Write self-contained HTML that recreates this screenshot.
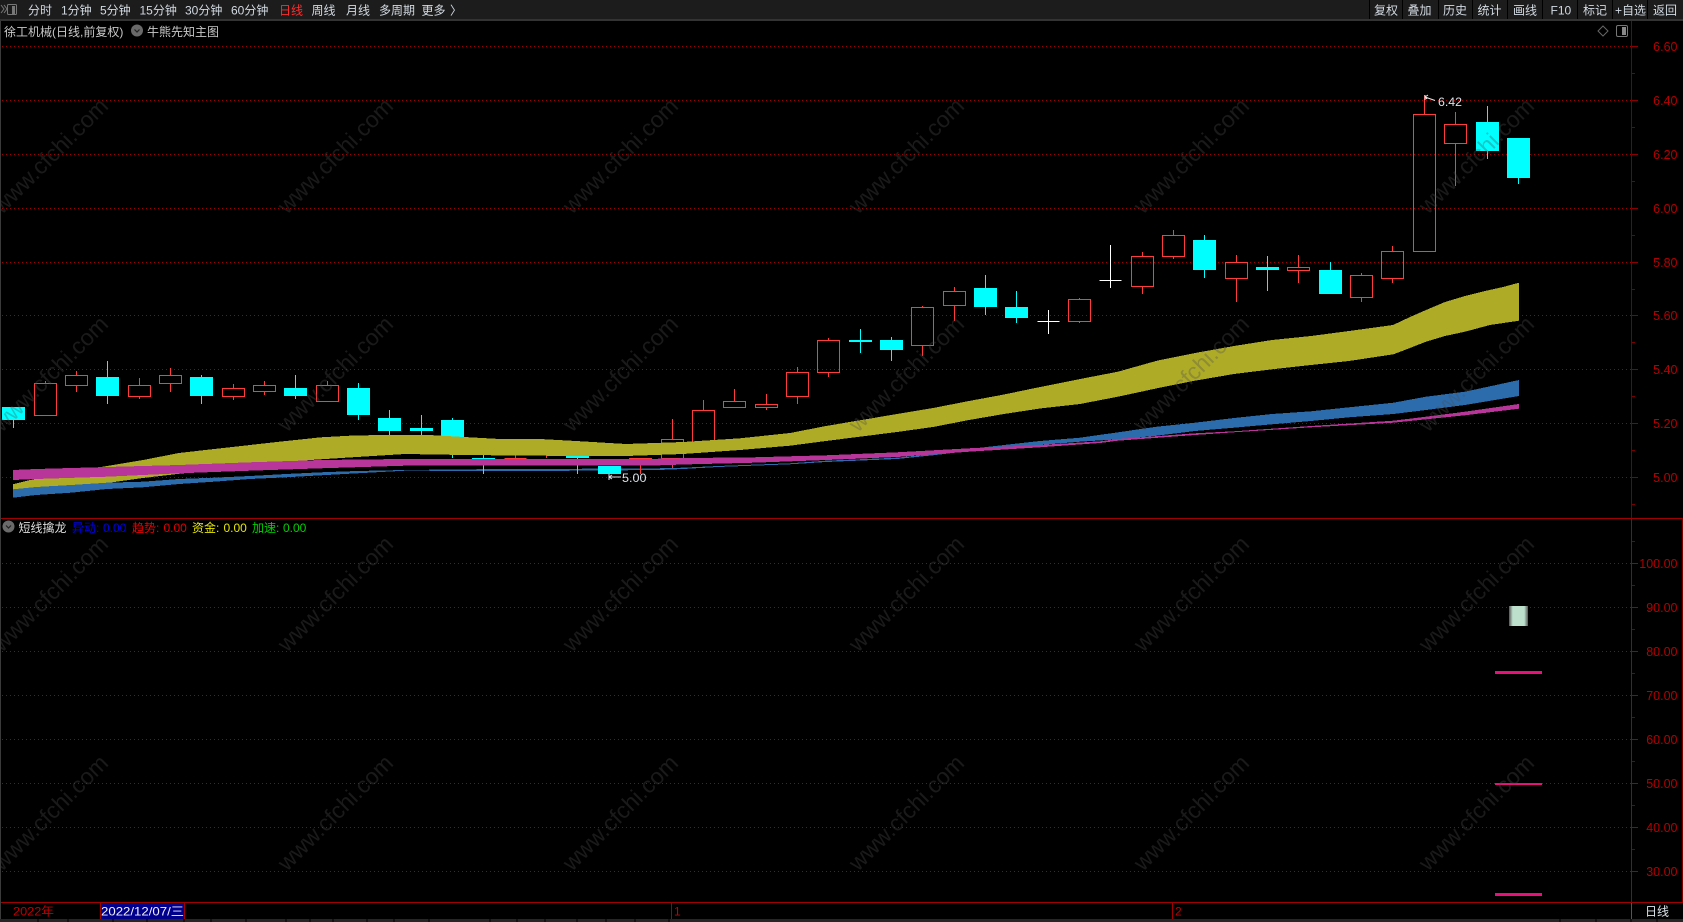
<!DOCTYPE html>
<html lang="zh">
<head>
<meta charset="utf-8">
<title>徐工机械</title>
<style>
html,body{margin:0;padding:0;background:#000;width:1683px;height:922px;overflow:hidden}
svg{display:block;position:absolute;left:0;top:0}
text{font-family:"Liberation Sans","Noto Sans CJK SC",sans-serif;font-size:12px}
.tb text{fill:#d2dae2}
.ax text{fill:#b40000;font-size:12.5px;text-anchor:end}
.wm text{font-size:23px;fill:#505050;fill-opacity:.33}
</style>
</head>
<body>
<svg width="1683" height="922" viewBox="0 0 1683 922" xmlns="http://www.w3.org/2000/svg">
<rect width="1683" height="922" fill="#000"/>

<!-- grid -->
<g stroke="#a00000" stroke-width="1" stroke-dasharray="1 3" fill="none" shape-rendering="crispEdges">
<path d="M2 46.5H1631M2 100.5H1631M2 154.5H1631M2 208.5H1631M2 262.5H1631M2 315.5H1631M2 369.5H1631M2 423.5H1631M2 477.5H1631"/>
<path d="M2 563.5H1631M2 607.5H1631M2 651.5H1631M2 695.5H1631M2 739.5H1631M2 783.5H1631M2 827.5H1631M2 871.5H1631"/>
</g>

<!-- candles -->
<g shape-rendering="crispEdges" fill="none" stroke-width="1">
<path stroke="#ff3c3c" d="
M34.5 383.5H56.5V415.5H34.5ZM45.5 381V383
M65.5 375.5H87.5V385.5H65.5ZM76.5 371V375M76.5 386V392
M128.5 385.5H150.5V396.5H128.5ZM139.5 378V385M139.5 397V399
M159.5 375.5H181.5V383.5H159.5ZM170.5 368V375M170.5 384V392
M222.5 388.5H244.5V396.5H222.5ZM233.5 384V388M233.5 397V400
M253.5 385.5H275.5V391.5H253.5ZM264.5 381V385M264.5 392V395
M316.5 385.5H338.5V401.5H316.5ZM327.5 381V385
M504.5 458.5H526.5M515.5 455V458
M546.5 455V458
M629.5 458.5H651.5V463.5H629.5ZM640.5 464V474
M661.5 439.5H683.5V458.5H661.5ZM672.5 419V439M672.5 459V468
M692.5 410.5H714.5V443.5H692.5ZM703.5 400V410
M723.5 401.5H745.5V407.5H723.5ZM734.5 389V401
M755.5 404.5H777.5V407.5H755.5ZM766.5 394V404M766.5 408V410
M786.5 372.5H808.5V396.5H786.5ZM797.5 367V372M797.5 397V404
M817.5 340.5H839.5V372.5H817.5ZM828.5 338V340M828.5 373V377
M911.5 307.5H933.5V345.5H911.5ZM922.5 306V307M922.5 346V356
M943.5 291.5H965.5V305.5H943.5ZM954.5 287V291M954.5 306V321
M1068.5 299.5H1090.5V321.5H1068.5ZM1079.5 298V299M1079.5 322V323
M1131.5 256.5H1153.5V286.5H1131.5ZM1142.5 252V256M1142.5 287V294
M1162.5 235.5H1184.5V256.5H1162.5ZM1173.5 230V235M1173.5 257V259
M1225.5 262.5H1247.5V278.5H1225.5ZM1236.5 255V262M1236.5 279V302
M1287.5 267.5H1309.5V270.5H1287.5ZM1298.5 255V267M1298.5 271V283
M1350.5 275.5H1372.5V297.5H1350.5ZM1361.5 273V275M1361.5 298V302
M1381.5 251.5H1403.5V278.5H1381.5ZM1392.5 246V251M1392.5 279V283
M1413.5 114.5H1435.5V251.5H1413.5ZM1424.5 95V114
M1444.5 124.5H1466.5V143.5H1444.5ZM1455.5 112V124M1455.5 144V186"/>
<path stroke="#00ffff" d="M13.5 420V428M107.5 361V377M107.5 396V404M201.5 375V377M201.5 396V404M295.5 375V388M295.5 396V399M358.5 383V388M358.5 415V420M389.5 410V418M389.5 431V435M421.5 415V428M421.5 431V435M452.5 418V420M452.5 437V458M483.5 455V474M577.5 458V474M860.5 329V353M891.5 337V340M891.5 350V361M985.5 275V288M985.5 307V315M1016.5 291V307M1016.5 318V323M1204.5 235V240M1204.5 270V278M1267.5 256V291M1330.5 262V270M1487.5 106V122M1487.5 151V159M1518.5 178V184"/>
<path fill="#00ffff" d="M2 407h23v13h-23zM96 377h23v19h-23zM190 377h23v19h-23zM284 388h23v8h-23zM347 388h23v27h-23zM378 418h23v13h-23zM410 428h23v3h-23zM441 420h23v17h-23zM472 458h23v1h-23zM566 455h23v3h-23zM849 340h23v2h-23zM880 340h23v10h-23zM974 288h23v19h-23zM1005 307h23v11h-23zM1193 240h23v30h-23zM1256 267h23v3h-23zM1319 270h23v24h-23zM1476 122h23v29h-23zM1507 138h23v40h-23z"/>
<path stroke="#ffffff" d="M1037.5 321.5H1059.5M1048.5 310V334M1099.5 280.5H1121.5M1110.5 245V288"/>
</g>

<!-- bands -->
<g shape-rendering="crispEdges">
<polygon fill="#aeab27" points="13,484.3 30,480 103,466.7 143,460 179,453 214,449 250,445 286,441 321,437.3 357,435.3 429,435 464,437 500,439 540,439 576,441 626,444 683,442 740,438.3 790,433 826,426 897,414 933,408 969,401 1004,394.5 1040,387 1080,379 1118,371.7 1157,360.7 1195,353 1234,346 1272,340 1311,336 1349,331 1393,325 1410,317 1426,310 1445,302 1465,296 1485,291 1503,287 1519,282.7 1519,320.7 1490,325 1465,331.7 1445,336 1426,341.7 1410,348 1393.5,354.3 1349,361 1311,365 1272,369.3 1234,374 1195,380.7 1157,388.3 1118,396.7 1080,404 1040,408.5 1004,414 969,420 933,427 897,432 826,441 790,445.7 740,450 683,454 626,456 576,456 540,455.7 464,455 405,454 357,457 310,460 186,473 143,478 107,483 50,490 13,497.7"/>
<polygon fill="#2c6cad" points="13,489.3 36,487 71,485 107,482.7 143,481.7 179,479 214,477.7 250,476 286,474 321,472.3 357,471 405,470 500,469 540,469 658,468.3 683,467.7 718,466 790,463.3 826,460.7 897,457.7 933,454 969,449 1004,445 1040,441 1080,437.7 1118,432.3 1157,426.7 1195,422.7 1234,418 1272,414 1311,411.3 1349,407.3 1393.5,402.7 1426,396.7 1465,391.7 1519,380 1519,396 1465,405 1426,410 1393.5,414 1349,417.3 1311,421 1272,424.3 1234,427.7 1195,431 1157,435.7 1118,439.3 1080,441.7 1040,445 969,451 933,455.3 897,459 826,462 790,464.3 718,467 683,469 658,470 540,471 405,470.7 321,475.3 286,477.3 250,479 214,481.7 179,484 143,487.3 107,489 71,492.7 36,495 13,497.7"/>
<path d="M598 466h23v8h-23z" fill="#00ffff"/>
<path d="M483.5 466V474M577.5 466V474" stroke="#00ffff" stroke-width="1"/>
<path d="M640.5 466V474" stroke="#ff3c3c" stroke-width="1"/>
<polygon fill="#b8359a" points="13,470 36,469 107,467 179,465 250,462.3 321,460 405,459 540,459 647,459 690,458 754,457.3 826,455.3 897,452.3 969,448.3 1040,445 1100,441.3 1118,439 1195,433.3 1234,431.3 1311,426 1393.5,420.7 1426,416.7 1465,411.7 1519,404 1519,408.7 1465,415.3 1426,419.3 1393.5,422.7 1311,427.3 1234,432.3 1195,435 1118,440.7 1100,443 1040,447.3 969,451.7 897,457 826,460 754,462.7 690,464.3 647,465.7 405,465.7 321,468.3 250,470.7 179,473.3 107,476.7 36,479 13,480"/>
</g>

<!-- lower pane shapes -->
<defs><linearGradient id="g" x1="0" x2="1" y1="0" y2="0"><stop offset="0" stop-color="#555"/><stop offset=".2" stop-color="#bde0cd"/><stop offset=".8" stop-color="#bde0cd"/><stop offset="1" stop-color="#555"/></linearGradient></defs>
<rect x="1509" y="606" width="19" height="20" fill="url(#g)"/>
<g fill="#e8107a" shape-rendering="crispEdges">
<rect x="1495" y="671" width="47" height="3"/>
<rect x="1495" y="783" width="47" height="2"/>
<rect x="1495" y="893" width="47" height="3"/>
</g>

<!-- watermark -->
<g class="wm">
<text transform="translate(2 215) rotate(-45)">www.cfchi.com</text><text transform="translate(287 215) rotate(-45)">www.cfchi.com</text><text transform="translate(572 215) rotate(-45)">www.cfchi.com</text><text transform="translate(858 215) rotate(-45)">www.cfchi.com</text><text transform="translate(1143 215) rotate(-45)">www.cfchi.com</text><text transform="translate(1428 215) rotate(-45)">www.cfchi.com</text>
<text transform="translate(2 433) rotate(-45)">www.cfchi.com</text><text transform="translate(287 433) rotate(-45)">www.cfchi.com</text><text transform="translate(572 433) rotate(-45)">www.cfchi.com</text><text transform="translate(858 433) rotate(-45)">www.cfchi.com</text><text transform="translate(1143 433) rotate(-45)">www.cfchi.com</text><text transform="translate(1428 433) rotate(-45)">www.cfchi.com</text>
<text transform="translate(2 653) rotate(-45)">www.cfchi.com</text><text transform="translate(287 653) rotate(-45)">www.cfchi.com</text><text transform="translate(572 653) rotate(-45)">www.cfchi.com</text><text transform="translate(858 653) rotate(-45)">www.cfchi.com</text><text transform="translate(1143 653) rotate(-45)">www.cfchi.com</text><text transform="translate(1428 653) rotate(-45)">www.cfchi.com</text>
<text transform="translate(2 872) rotate(-45)">www.cfchi.com</text><text transform="translate(287 872) rotate(-45)">www.cfchi.com</text><text transform="translate(572 872) rotate(-45)">www.cfchi.com</text><text transform="translate(858 872) rotate(-45)">www.cfchi.com</text><text transform="translate(1143 872) rotate(-45)">www.cfchi.com</text><text transform="translate(1428 872) rotate(-45)">www.cfchi.com</text>
</g>

<!-- price labels -->
<g fill="#d8e0e8">
<path d="M609 477H621M609 477l3-2M609 477l3 2M609 474v6" stroke="#d8e0e8" stroke-width="1" fill="none"/>
<text x="622" y="482" textLength="24.500" lengthAdjust="spacingAndGlyphs">5.00</text>
<path d="M1425 97l10 3.500M1425 97l3-2M1425 97l2 2M1425 95v5" stroke="#e8e8e8" stroke-width="1" fill="none"/>
<text x="1438" y="106" textLength="24" lengthAdjust="spacingAndGlyphs">6.42</text>
</g>

<!-- frame lines -->
<g shape-rendering="crispEdges" fill="none">
<path d="M0.5 20V919" stroke="#3a3a3a"/>
<path d="M1631.5 20V518" stroke="#7a0000"/>
<path d="M1631.5 518V902" stroke="#a00000"/>
<path d="M1 518.5H1683M1 902.5H1683" stroke="#a00000"/>
<path d="M1682.5 518V902" stroke="#800000"/>
<path d="M1632 46.5h6M1632 100.5h6M1632 154.5h6M1632 208.5h6M1632 262.5h6M1632 315.5h6M1632 369.5h6M1632 423.5h6M1632 477.5h6" stroke="#8a0000"/>
<path d="M1632 73.5h3M1632 127.5h3M1632 181.5h3M1632 235.5h3M1632 289.5h3M1632 342.5h3M1632 396.5h3M1632 450.5h3M1632 504.5h3" stroke="#7a0000"/>
<path d="M1632 563.5h6M1632 607.5h6M1632 651.5h6M1632 695.5h6M1632 739.5h6M1632 783.5h6M1632 827.5h6M1632 871.5h6" stroke="#a00000"/>
<path d="M1632 541.5h3M1632 585.5h3M1632 629.5h3M1632 673.5h3M1632 717.5h3M1632 761.5h3M1632 805.5h3M1632 849.5h3" stroke="#800000"/>
</g>

<!-- axis labels -->
<g class="ax">
<text x="1677.5" y="51">6.60</text><text x="1677.5" y="105">6.40</text><text x="1677.5" y="159">6.20</text><text x="1677.5" y="213">6.00</text><text x="1677.5" y="267">5.80</text><text x="1677.5" y="320">5.60</text><text x="1677.5" y="374">5.40</text><text x="1677.5" y="428">5.20</text><text x="1677.5" y="482">5.00</text>
<text x="1677.5" y="568">100.00</text><text x="1677.5" y="612">90.00</text><text x="1677.5" y="656">80.00</text><text x="1677.5" y="700">70.00</text><text x="1677.5" y="744">60.00</text><text x="1677.5" y="788">50.00</text><text x="1677.5" y="832">40.00</text><text x="1677.5" y="876">30.00</text>
</g>

<!-- toolbar -->
<rect x="0" y="0" width="1683" height="19" fill="#1c1c1c"/>
<rect x="0" y="19" width="1683" height="2" fill="#333"/>
<path d="M1369.5 0V19M1402.5 0V19M1438.5 0V19M1472.5 0V19M1507.5 0V19M1542.5 0V19M1577.5 0V19M1612.5 0V19M1647.5 0V19" stroke="#000" shape-rendering="crispEdges"/>
<g fill="none" stroke="#777" stroke-width="1">
<path d="M1 5l3 4-3 4M4 5l3 4-3 4"/>
<rect x="7.500" y="4.500" width="9" height="10" rx="1"/>
</g>
<rect x="12" y="6" width="3" height="8" fill="#777"/>
<g class="tb">
<text x="28" y="14.5">分时</text>
<text x="61" y="14.5">1分钟</text>
<text x="100" y="14.5">5分钟</text>
<text x="139.500" y="14.5">15分钟</text>
<text x="185" y="14.5">30分钟</text>
<text x="231" y="14.5">60分钟</text>
<text x="279" y="14.500" style="fill:#ff2d2d">日线</text>
<text x="311.500" y="14.5">周线</text>
<text x="346" y="14.5">月线</text>
<text x="379" y="14.5">多周期</text>
<text x="421.500" y="14.5">更多</text>
<text x="450" y="14.5">〉</text>
<text x="1374" y="14.5">复权</text>
<text x="1407.500" y="14.5">叠加</text>
<text x="1443" y="14.5">历史</text>
<text x="1477.500" y="14.5">统计</text>
<text x="1513" y="14.5">画线</text>
<text x="1550.500" y="14.5">F10</text>
<text x="1583" y="14.5">标记</text>
<text x="1615" y="14.5">+自选</text>
<text x="1653" y="14.5">返回</text>
</g>

<!-- title row -->
<text x="4" y="36" fill="#c8c8c8">徐工机械(日线,前复权)</text>
<circle cx="137" cy="30.500" r="6" fill="#6a6a6a"/>
<path d="M134.500 29.500l2.500 2.500 2.500-2.500" stroke="#222" stroke-width="1.200" fill="none"/>
<text x="147" y="36" fill="#c8c8c8">牛熊先知主图</text>
<path d="M1603 26l5 5-5 5-5-5z" fill="none" stroke="#666"/>
<rect x="1616.500" y="25.500" width="11" height="11" rx="1.500" fill="none" stroke="#777"/>
<rect x="1622" y="27" width="4" height="8" fill="#888"/>

<!-- indicator row -->
<circle cx="8.500" cy="526.500" r="6" fill="#6a6a6a"/>
<path d="M6 525.500l2.500 2.500 2.500-2.500" stroke="#222" stroke-width="1.200" fill="none"/>
<text x="18.500" y="532" fill="#dcdcdc">短线擒龙</text>
<text x="72" y="532" fill="#0000e6">异动: </text><text x="103" y="532" fill="#0000e6">0.00</text>
<text x="132" y="532" fill="#e60000">趋势: </text><text x="163.500" y="532" fill="#e60000">0.00</text>
<text x="192" y="532" fill="#e6e600">资金: </text><text x="223.500" y="532" fill="#e6e600">0.00</text>
<text x="252" y="532" fill="#00d000">加速: </text><text x="283" y="532" fill="#00d000">0.00</text>

<!-- bottom bar -->
<rect x="100" y="903" width="85" height="16" fill="#00008c"/>
<path d="M100.500 903V919M184.500 903V919M671.500 903V919M1172.500 903V919" stroke="#a00000" shape-rendering="crispEdges"/>
<path d="M1631.500 903V919" stroke="#555" shape-rendering="crispEdges"/>
<text x="13" y="915.500" fill="#c00000" textLength="41" lengthAdjust="spacingAndGlyphs">2022年</text>
<text x="101" y="915.500" fill="#f0f0ff" textLength="83" lengthAdjust="spacingAndGlyphs">2022/12/07/三</text>
<text x="674" y="915.500" fill="#c00000">1</text>
<text x="1175" y="915.500" fill="#c00000">2</text>
<text x="1645" y="915.500" fill="#dce4ea">日线</text>
<rect x="0" y="919" width="1683" height="3" fill="#262626"/>
<path d="M38 919v3M68 919v3M113 919v3M147 919v3M184 919v3M211 919v3M246 919v3M286 919v3M310 919v3M333 919v3M367 919v3M394 919v3M429 919v3M490 919v3M517 919v3M545 919v3M577 919v3M606 919v3M635 919v3M669 919v3M1560 919v3M1596 919v3M1631 919v3M1657 919v3" stroke="#000" shape-rendering="crispEdges"/>
</svg>
</body>
</html>
